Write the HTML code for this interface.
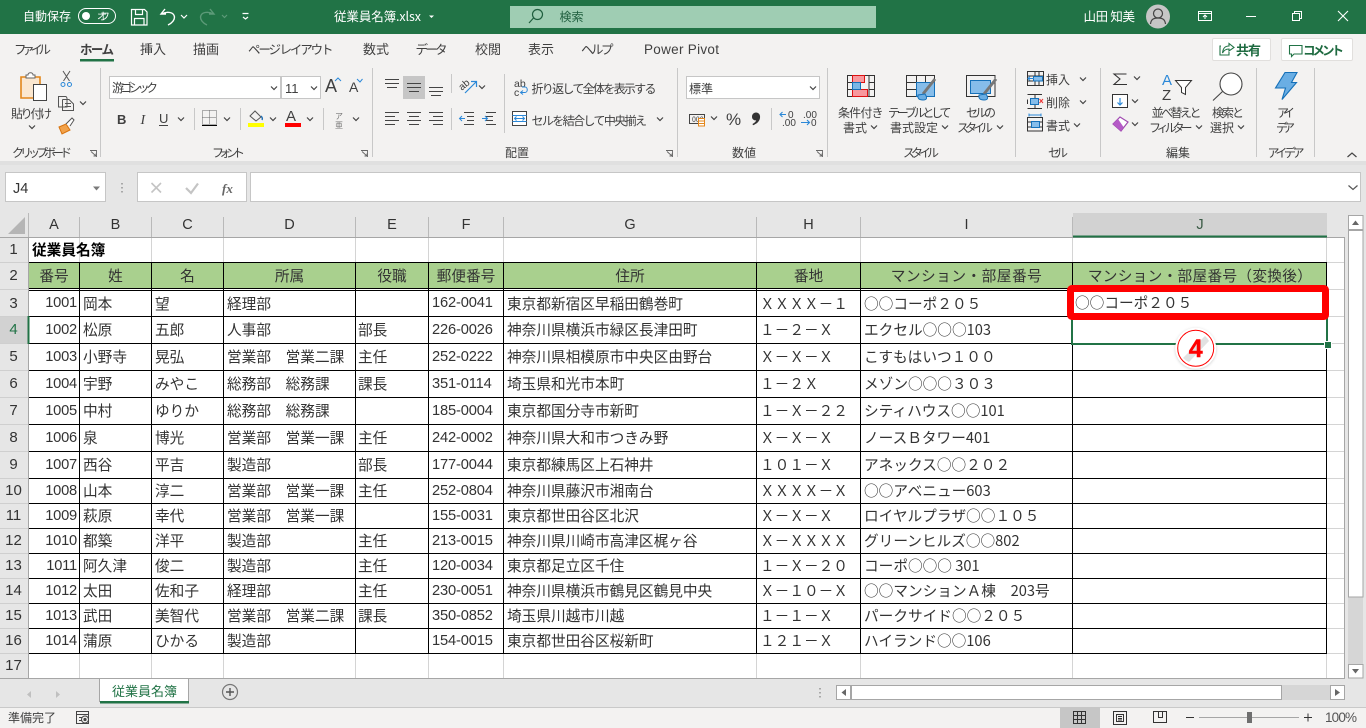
<!DOCTYPE html>
<html lang="ja"><head><meta charset="utf-8"><title>従業員名簿.xlsx - Excel</title>
<style>
html,body{margin:0;padding:0}
body{width:1366px;height:728px;position:relative;overflow:hidden;background:#e6e6e6;font-family:"Noto Sans CJK JP","Liberation Sans",sans-serif;color:#222}
.abs,.r,.r span,.h{position:absolute}
#tb{left:0;top:0;width:1366px;height:34px;background:#217346}
#rb{left:0;top:34px;width:1366px;height:127px;background:#f3f2f1}
#st{left:0;top:707px;width:1366px;height:21px;background:#f3f2f1;border-top:1px solid #c9c9c9;box-sizing:border-box}
svg{position:absolute;left:0;top:0}
svg text{font-family:"Noto Sans CJK JP","Liberation Sans",sans-serif;font-size:12px;fill:#404040}
.w{fill:#fff!important}
#sheet{left:29px;top:237px;width:1315px;height:441px;background:#fff}
.r{left:0;width:1366px;font-size:14.67px;white-space:pre;color:#333}
.r span{top:0;white-space:pre}
.a{right:1289px;font-family:"Liberation Sans",sans-serif;letter-spacing:-.2px}
.b{left:83px}.c{left:155px}.d{left:227px}.e{left:358px}
.f{left:432px;font-family:"Liberation Sans",sans-serif;letter-spacing:-.15px}
.g{left:507px}.hh{left:760px}.i{left:864px}.j{left:1075px}
.rh{left:0;width:27px;text-align:center;color:#333;font-size:15px;font-family:"Liberation Sans",sans-serif}
.ch{top:213px;height:23px;line-height:24px;text-align:center;font-size:14.5px;color:#333;font-family:"Liberation Sans",sans-serif}
.g2 span{text-align:center;height:26px}
</style></head><body>
<div class="abs" id="tb"></div>
<div class="abs" id="rb"></div>
<div class="abs" style="left:0;top:161px;width:1366px;height:4px;background:#e0e0e0"></div>

<!-- name box / formula bar -->
<div class="abs" style="left:5px;top:172px;width:101px;height:30px;background:#fff;border:1px solid #c6c6c6;box-sizing:border-box;font:14.5px/33px 'Liberation Sans',sans-serif;color:#333;padding-left:7px">J4</div>
<div class="abs" style="left:137px;top:172px;width:110px;height:30px;background:#fff;border:1px solid #c6c6c6;box-sizing:border-box"></div>
<div class="abs" style="left:250px;top:172px;width:1111px;height:30px;background:#fff;border:1px solid #c6c6c6;box-sizing:border-box"></div>

<div class="abs" id="sheet"></div>
<!-- green header rows -->
<div class="abs" style="left:29px;top:263px;width:1298px;height:26px;background:#a9d08e"></div>
<!-- selected headers -->
<div class="abs" style="left:1073px;top:213px;width:254px;height:23px;background:#d2d2d2"></div>
<div class="abs" style="left:0;top:317px;width:28px;height:26px;background:#d2d2d2"></div>

<svg width="1366" height="728" viewBox="0 0 1366 728">
<defs>
<path id="c" d="M-3 -1.5L0 1.5L3 -1.5" fill="none" stroke="#444" stroke-width="1.2"/>
</defs>
<!-- grid light lines -->
<g stroke="#d4d4d4" fill="none">
<path d="M79.5 237V262M151.5 237V262M223.5 237V262M355.5 237V262M428.5 237V262M503.5 237V262M756.5 237V262M860.5 237V262M1072.5 237V262M1326.5 237V678M79.5 654V678M151.5 654V678M223.5 654V678M355.5 654V678M428.5 654V678M503.5 654V678M756.5 654V678M860.5 654V678M1072.5 654V678"/>
<path d="M1327 262.5H1344M1327 289.5H1344M1327 316.5H1344M1327 343.5H1344M1327 370.5H1344M1327 397.5H1344M1327 424.5H1344M1327 451.5H1344M1327 478.5H1344M1327 503.5H1344M1327 528.5H1344M1327 553.5H1344M1327 578.5H1344M1327 603.5H1344M1327 628.5H1344M1327 653.5H1344"/>
</g>
<!-- grid black lines -->
<g stroke="#000" fill="none" stroke-width="1">
<path d="M29 262.5H1327M29 288.5H1327M29 290.5H1327M29 316.5H1327M29 343.5H1327M29 370.5H1327M29 397.5H1327M29 424.5H1327M29 451.5H1327M29 478.5H1327M29 503.5H1327M29 528.5H1327M29 553.5H1327M29 578.5H1327M29 603.5H1327M29 628.5H1327M29 653.5H1327"/>
<path d="M79.5 262V654M151.5 262V654M223.5 262V654M355.5 262V654M428.5 262V654M503.5 262V654M756.5 262V654M860.5 262V654M1072.5 262V654M1326.5 262V654"/>
</g>
<!-- header chrome -->
<g fill="none" stroke="#b9b9b9">
<path d="M28.5 213V237M79.5 217V237M151.5 217V237M223.5 217V237M355.5 217V237M428.5 217V237M503.5 217V237M756.5 217V237M860.5 217V237M1072.5 217V237"/>
</g>
<path d="M0 237.5H1344.5V678.5H0M28.5 237V678" fill="none" stroke="#a6a6a6"/>
<path d="M0 262.5H28M0 289.5H28M0 316.5H28M0 343.5H28M0 370.5H28M0 397.5H28M0 424.5H28M0 451.5H28M0 478.5H28M0 503.5H28M0 528.5H28M0 553.5H28M0 578.5H28M0 603.5H28M0 628.5H28M0 653.5H28" stroke="#cfcfcf" fill="none"/>
<path d="M25 217V234H8Z" fill="#b5b5b5"/>
<rect x="1073" y="235.5" width="254" height="2" fill="#217346"/>
<rect x="27.5" y="316" width="2" height="28" fill="#217346"/>

<!-- TITLE BAR -->
<text class="w" x="23" y="20.5" textLength="48">自動保存</text>
<rect x="78.5" y="8.5" width="37" height="15" rx="7.5" fill="none" stroke="#fff"/>
<circle cx="86" cy="16" r="4" fill="#fff"/>
<text class="w" x="97" y="20" style="font-size:10px" textLength="13">オフ</text>
<g fill="none" stroke="#fff" stroke-width="1.2">
<path d="M131.5 9.5H144.5L147 12V25H131.5ZM135.5 9.5V14.5H142.5V9.5M134.5 25V18.5H144V25"/>
<path d="M165 9L161 14L166 14M161.5 14C167 11 174 12 174.5 17C174.5 20 172 23 168 25" stroke-width="1.4"/>
<g stroke="#5c9a78"><path d="M210 9L214 14L209 14M213.5 14C208 11 201 12 200.5 17C200.5 20 203 23 207 25" stroke-width="1.4"/></g>
<path d="M242.5 13.5H248.5M243 17L245.5 19L248 17"/>
<path d="M181 15L184 18L187 15"/>
<path d="M222 15L224.5 17.5L227 15" stroke="#5c9a78"/>
</g>
<text class="w" x="334" y="21" style="font-size:12.5px" textLength="87">従業員名簿.xlsx</text>
<path d="M429 15.5H434L431.5 18Z" fill="#fff"/>
<rect x="510" y="6" width="366" height="22" fill="#9fcdb3"/>
<g fill="none" stroke="#1f5e3e" stroke-width="1.2"><circle cx="537.5" cy="14.5" r="5"/><path d="M533.5 18L529 23"/></g>
<text x="559.5" y="21" style="fill:#1f5e3e" textLength="24">検索</text>
<text class="w" x="1083.5" y="21" style="font-size:12.5px" textLength="51.5">山田 知美</text>
<circle cx="1158" cy="16.5" r="12" fill="#c6c6c6"/>
<g fill="none" stroke="#444" stroke-width="1.2"><circle cx="1158" cy="13.5" r="4.5"/><path d="M1150.5 24C1151 19 1154 18 1158 18S1165 19 1165.5 24"/></g>
<g fill="none" stroke="#fff">
<path d="M1198.5 11.5H1211.5V20.5H1198.5ZM1198.5 13.5H1211.5M1205 19V15M1203 17L1205 15L1207 17"/>
<path d="M1246 16.5H1256"/>
<path d="M1292.5 13.5H1299.5V20.5H1292.5ZM1294.5 13.5V11.5H1301.5V18.5H1299.5"/>
<path d="M1338 11L1348 21M1348 11L1338 21" stroke-width="1.1"/>
</g>

<!-- TABS -->
<g>
<text x="14" y="54" style="font-size:12.5px" textLength="37">ファイル</text>
<text x="80" y="54" style="font-size:12.5px;font-weight:700" textLength="34">ホーム</text>
<text x="140" y="54" style="font-size:13px" textLength="26">挿入</text>
<text x="193" y="54" style="font-size:13px" textLength="26">描画</text>
<text x="248" y="54" style="font-size:12.5px" textLength="85.5">ページ レイアウト</text>
<text x="363" y="54" style="font-size:13px" textLength="26">数式</text>
<text x="415.5" y="54" style="font-size:12.5px" textLength="32">データ</text>
<text x="475" y="54" style="font-size:13px" textLength="26">校閲</text>
<text x="528" y="54" style="font-size:13px" textLength="26">表示</text>
<text x="581" y="54" style="font-size:12.5px" textLength="32.5">ヘルプ</text>
<text x="644" y="54" style="font-size:13.5px;font-family:'Liberation Sans',sans-serif" textLength="75">Power Pivot</text>
</g>
<rect x="80" y="59" width="34" height="2.5" fill="#217346"/>
<rect x="1212.5" y="38.5" width="58" height="22" rx="1.5" fill="#fff" stroke="#e1dfdd"/>
<rect x="1281.5" y="38.5" width="71" height="22" rx="1.5" fill="#fff" stroke="#e1dfdd"/>
<g fill="none" stroke="#217346" stroke-width="1.1">
<path d="M1221 46H1220V55H1229V52M1222.5 53C1223 48 1225 46 1229 46V43.5L1234 47.5L1229 51V49C1226 49 1224 50 1222.5 53Z"/>
<path d="M1289.5 45.5H1302V54H1294L1291.5 56.5V54H1289.5Z"/>
</g>
<text x="1236" y="55" style="font-size:13px;font-weight:700;fill:#1f6b41" textLength="25">共有</text>
<text x="1303" y="55" style="font-size:12.5px;font-weight:700;fill:#1f6b41" textLength="41">コメント</text>

<!-- ribbon separators -->
<path d="M100.5 68V157M372.5 68V157M677.5 68V157M827.5 68V157M1015.5 68V157M1100.5 68V157M1256.5 68V157M1314.5 68V157M504.5 74V133M451.5 74V93M451.5 108V130M194.5 108V130M240.5 108V130M323.5 108V130M771.5 108V130" stroke="#c8c8c8" fill="none"/>

<!-- group labels -->
<text x="12" y="157" textLength="60">クリップボード</text>
<text x="212" y="157" textLength="33">フォント</text>
<text x="505" y="157" textLength="24">配置</text>
<text x="732" y="157" textLength="24">数値</text>
<text x="903" y="157" textLength="36">スタイル</text>
<text x="1048" y="157" textLength="20">セル</text>
<text x="1166" y="157" textLength="24">編集</text>
<text x="1267.5" y="157" textLength="37">アイデア</text>
<g fill="none" stroke="#666" stroke-width=".9">
<path d="M90 150.5H96.5V157M91 151.5L96 156M96 153.5V156H93.5"/>
<path d="M361 150.5H367.5V157M362 151.5L367 156M367 153.5V156H364.5"/>
<path d="M666 150.5H672.5V157M667 151.5L672 156M672 153.5V156H669.5"/>
<path d="M816 150.5H822.5V157M817 151.5L822 156M822 153.5V156H819.5"/>
</g>
<path d="M1347.5 157L1352 153L1356.5 157" fill="none" stroke="#444" stroke-width="1.2"/>

<!-- Clipboard -->
<path d="M21 77H40V98H21Z" fill="#fbe7cf" stroke="#e3861a" stroke-width="1.6"/>
<path d="M26 78V75H28C28 72 33 72 33 75H35V78Z" fill="#fff" stroke="#666"/>
<rect x="33.5" y="84.5" width="13" height="16" fill="#fff" stroke="#444"/>
<text x="11" y="118" textLength="41">貼り付け</text>
<use href="#c" x="32" y="127"/>
<g fill="none" stroke="#555">
<path d="M63 71L69.5 81M70 71L63.5 81"/>
<circle cx="63" cy="84.5" r="2" stroke="#2b88d8"/><circle cx="69.5" cy="84.5" r="2" stroke="#2b88d8"/>
<path d="M58.5 96.5H66L67 98V107H58.5ZM62.5 99.5H69L73.5 104V110.5H62.5V99.5M65 103.5H71M65 106.5H71"/>
</g>
<use href="#c" x="83" y="103"/>
<path d="M59 127L66 124L70 130L62 134Z" fill="#f2a24a" stroke="#d8730e"/><path d="M66 124L72 118L74 120L70 126" fill="#fff" stroke="#555"/>

<!-- Font -->
<rect x="109.5" y="76.5" width="171" height="22" fill="#fff" stroke="#c6c6c6"/>
<rect x="281.5" y="76.5" width="39" height="22" fill="#fff" stroke="#c6c6c6"/>
<text x="112" y="92" textLength="46">游ゴシック</text>
<text x="285" y="93" style="font-family:'Liberation Sans',sans-serif;font-size:13px">11</text>
<use href="#c" x="274" y="88"/><use href="#c" x="314" y="88"/>
<text x="325" y="92" style="font-family:'Liberation Sans',sans-serif;font-size:18px">A</text>
<text x="349" y="92" style="font-family:'Liberation Sans',sans-serif;font-size:14px">A</text>
<path d="M335 81L338 78L341 81" fill="none" stroke="#2b88d8"/><path d="M357 79L360 82L362.5 79" fill="none" stroke="#2b88d8"/>
<text x="117" y="124" style="font:700 13px 'Liberation Sans',sans-serif">B</text>
<text x="140.5" y="124" style="font:italic 14px 'Liberation Serif',serif">I</text>
<text x="159" y="123" style="font:13px 'Liberation Sans',sans-serif">U</text>
<path d="M159 125.5H168" stroke="#444"/>
<use href="#c" x="181" y="119"/><use href="#c" x="227" y="119"/><use href="#c" x="273" y="119"/><use href="#c" x="310" y="119"/><use href="#c" x="356" y="119"/>
<path d="M202.5 110.5H216.5V124.5H202.5ZM209.5 110.5V124.5M202.5 117.5H216.5" fill="none" stroke="#666" stroke-dasharray="1 1"/>
<path d="M202 125.5H217" stroke="#000"/>
<path d="M250 116L255 111L261 117L256 121Z" fill="none" stroke="#555"/><path d="M261 116Q263 118 262 120" stroke="#1f6fb5" fill="none" stroke-width="1.4"/>
<rect x="248" y="123" width="16" height="4" fill="#ff0"/>
<text x="286" y="121" style="font:15px 'Liberation Sans',sans-serif">A</text>
<rect x="285" y="123" width="16" height="4" fill="#f00"/>
<text x="335" y="119" style="font-size:8px;fill:#777">ア</text><text x="335" y="128" style="font-size:8px;fill:#777">亜</text>

<!-- Alignment -->
<rect x="403" y="76" width="22" height="23" fill="#c6c6c6"/>
<g fill="none" stroke="#444">
<path d="M385 79.5H399M385 83.5H399M387 87.5H397"/>
<path d="M407 83.5H421M407 87.5H421M409 91.5H419"/>
<path d="M429 87.5H443M429 91.5H443M431 95.5H441"/>
<path d="M385 112.5H399M385 116.5H395M385 120.5H399M385 124.5H395"/>
<path d="M407 112.5H421M409 116.5H419M407 120.5H421M409 124.5H419"/>
<path d="M429 112.5H443M433 116.5H443M429 120.5H443M433 124.5H443"/>
<path d="M464 112.5H474M467 116.5H474M467 120.5H474M464 124.5H474"/>
<path d="M486 112.5H496M486 116.5H493M486 120.5H493M486 124.5H496"/>
</g>
<path d="M460 118.5H465M462 116L459.5 118.5L462 121" fill="none" stroke="#2b88d8"/>
<path d="M482 118.5H487M485 116L487.5 118.5L485 121" fill="none" stroke="#2b88d8"/>
<text x="459" y="89" transform="rotate(-40 463 86)" style="font:10px 'Liberation Sans',sans-serif">ab</text>
<path d="M465 93L476 82M471 81.5H476.5V87" fill="none" stroke="#2b88d8" stroke-width="1.2"/>
<use href="#c" x="482" y="87"/>
<text x="514" y="87" style="font:10.5px 'Liberation Sans',sans-serif">ab</text>
<text x="514" y="96" style="font:10.5px 'Liberation Sans',sans-serif">c</text>
<path d="M521 92.5H525C528 92.5 528 87 525 87H522M523 90.5L520.5 92.5L523 94.5" fill="none" stroke="#2b88d8"/>
<text x="531.5" y="93" textLength="125">折り返して全体を表示する</text>
<rect x="512.5" y="111.5" width="14" height="14" fill="#fff" stroke="#444"/>
<path d="M512.5 115.5H526.5M512.5 121.5H526.5" stroke="#2b88d8"/>
<rect x="513" y="116" width="13" height="5" fill="#fff"/>
<path d="M514.5 118.5H524.5M516.5 116.5L514.5 118.5L516.5 120.5M522.5 116.5L524.5 118.5L522.5 120.5" fill="none" stroke="#2b88d8"/>
<text x="531.5" y="125" textLength="115.5">セルを結合して中央揃え</text>
<use href="#c" x="660" y="119"/>

<!-- Number -->
<rect x="686.5" y="76.5" width="133" height="22" fill="#fff" stroke="#c6c6c6"/>
<text x="689" y="93">標準</text>
<use href="#c" x="813" y="88"/>
<rect x="689.5" y="114.5" width="15" height="9" fill="none" stroke="#444"/><text x="692" y="122" style="font-size:7px">000</text>
<rect x="698.5" y="118.5" width="6" height="7.5" fill="#fff" stroke="#e3861a"/>
<path d="M698.5 121H704.5M698.5 123.5H704.5" stroke="#e3861a"/>
<use href="#c" x="714" y="118"/>
<text x="726" y="125" style="font:17px 'Liberation Sans',sans-serif">%</text>
<path d="M756 112.5C759 112.5 760.5 115 760 118C759.5 121.5 756.5 124 753 125.2L752.5 124C754.5 123 755.8 121.8 756.2 120.3C753.8 120.6 752 119 752 116.7C752 114.3 753.7 112.5 756 112.5Z" fill="#333"/>
<g style="font:10px 'Liberation Sans',sans-serif">
<text x="788" y="118" style="font:10px 'Liberation Sans',sans-serif">0</text>
<text x="782" y="126" style="font:10px 'Liberation Sans',sans-serif">.00</text>
<text x="803" y="118" style="font:10px 'Liberation Sans',sans-serif">.00</text>
<text x="811" y="126" style="font:10px 'Liberation Sans',sans-serif">0</text>
</g>
<path d="M786 114.5H780M782.5 112L780 114.5L782.5 117M801 122.5H809.5M807 120L809.5 122.5L807 125" fill="none" stroke="#2b88d8" stroke-width="1.1"/>

<!-- Styles -->
<g stroke="#333" fill="none">
<path d="M847.5 75.5H874.5V96.5H847.5Z"/>
<rect x="852.5" y="75.5" width="12" height="7" fill="#f8989d" stroke="#d11"/>
<rect x="852.5" y="89.5" width="15" height="7" fill="#f8989d" stroke="#d11"/>
<rect x="852.5" y="82.5" width="8" height="7" fill="#7bb7e6" stroke="#1570b8"/>
<path d="M847.5 82.5H852M847.5 89.5H852M869 82.5H874.5M869 89.5H874.5M869 75.5V96.5"/>
</g>
<text x="838" y="117" textLength="45.5">条件付き</text>
<text x="843" y="132" textLength="24">書式</text><use href="#c" x="874" y="127"/>
<g stroke="#333" fill="none">
<path d="M906.5 75.5H934.5V96.5H906.5ZM906.5 82.5H934.5M906.5 89.5H934.5M916.5 75.5V96.5M925.5 75.5V96.5"/>
<rect x="916.5" y="82.5" width="18" height="14" fill="#86bdea" stroke="#1570b8"/>
<path d="M935 79L923 94" stroke="#777" stroke-width="3"/><path d="M918 95Q917 100 923 100T925 94Z" fill="#6aaee4" stroke="#1570b8"/>
<path d="M966.5 75.5H995V96.5H966.5Z"/>
<rect x="970.5" y="80.5" width="20" height="13" fill="#86bdea" stroke="#1570b8"/>
<path d="M996 79L984 94" stroke="#777" stroke-width="3"/><path d="M979 95Q978 100 984 100T986 94Z" fill="#6aaee4" stroke="#1570b8"/>
</g>
<text x="888" y="117" textLength="63.5">テーブルとして</text>
<text x="890" y="132" textLength="48">書式設定</text><use href="#c" x="945" y="127"/>
<text x="966" y="117" textLength="30">セルの</text>
<text x="957" y="132" textLength="36">スタイル</text><use href="#c" x="1000" y="127"/>

<!-- Cells -->
<g fill="none" stroke="#333">
<path d="M1027.5 71.5H1043.5V85.5H1027.5ZM1027.5 76H1043.5M1027.5 81H1043.5M1035 71.5V85.5M1039 71.5V85.5"/>
<rect x="1033.5" y="76.5" width="9" height="4.5" fill="#86bdea" stroke="#1570b8"/>
<path d="M1034 78.5H1028M1030 76.5L1028 78.5L1030 80.5" stroke="#2b88d8"/>
<path d="M1027.5 94.5H1042M1027.5 108.5H1042M1035 94.5V99M1035 104V108.5M1027.5 99.5V104"/>
<rect x="1030.5" y="98.5" width="8" height="6" fill="#86bdea" stroke="#1570b8"/>
<path d="M1039.5 99L1043 103M1043 99L1039.5 103" stroke="#e33"/>
<rect x="1027.5" y="117.5" width="15" height="13.5"/>
<path d="M1027.5 122H1042.5M1027.5 127H1042.5"/>
<rect x="1031.5" y="121.5" width="8" height="6" fill="#86bdea" stroke="#1570b8"/>
<path d="M1029 115H1041M1029 113.5V116.5M1041 113.5V116.5" stroke="#2b88d8"/>
</g>
<text x="1046" y="84" textLength="24">挿入</text><use href="#c" x="1083" y="79"/>
<text x="1046" y="107" textLength="24">削除</text><use href="#c" x="1083" y="102"/>
<text x="1046" y="130" textLength="24">書式</text><use href="#c" x="1077" y="125"/>

<!-- Editing -->
<path d="M1126.5 74H1114L1120 79L1114 84.5H1127" fill="none" stroke="#333" stroke-width="1.1"/>
<use href="#c" x="1137" y="78"/>
<rect x="1112.5" y="94.5" width="15" height="13" fill="#fff" stroke="#333"/>
<path d="M1120 98V105M1117.5 102.5L1120 105L1122.5 102.5" fill="none" stroke="#2b88d8" stroke-width="1.2"/>
<use href="#c" x="1135" y="101"/>
<path d="M1113 124L1120 117L1128 122L1121 131Z" fill="#fff" stroke="#a04ab0" stroke-width="1.2"/><path d="M1113 124L1118 119L1123.5 127L1121 131Z" fill="#b55bc7"/>
<use href="#c" x="1135" y="124"/>
<text x="1162" y="85" style="font:15px 'Liberation Sans',sans-serif;fill:#2b88d8">A</text>
<text x="1162" y="100" style="font:15px 'Liberation Sans',sans-serif">Z</text>
<path d="M1175.5 80.5H1191.5L1185.5 87.5V94.5L1181.5 92.5V87.5Z" fill="#fff" stroke="#333"/>
<text x="1151.5" y="117" textLength="50">並べ替えと</text>
<text x="1149" y="132" textLength="43.5">フィルター</text><use href="#c" x="1199" y="127"/>
<circle cx="1231" cy="84" r="11" fill="#fff" stroke="#444" stroke-width="1.1"/>
<path d="M1222.5 91.5L1213 100.5" stroke="#444" fill="none" stroke-width="1.1"/>
<text x="1212" y="117" textLength="32">検索と</text>
<text x="1210" y="132" textLength="24">選択</text><use href="#c" x="1241" y="127"/>
<!-- Ideas -->
<path d="M1285 72.5H1297L1291.5 82.5H1296.5L1282 99.5L1285.5 88H1275.5Z" fill="#6aaee4" stroke="#1570b8" stroke-width="1.1"/>
<text x="1277" y="117" textLength="18">アイ</text>
<text x="1276" y="132" textLength="19">デア</text>

<!-- Formula bar bits -->
<path d="M93 186.5H100L96.5 190.5Z" fill="#7a7a7a"/>
<path d="M122 183V184.5M122 187V188.5M122 191V192.5" stroke="#999" stroke-width="1.6"/>
<path d="M151.5 183L161 192.5M161 183L151.5 192.5" stroke="#c4c4c4" stroke-width="1.6" fill="none"/>
<path d="M186 188L191 193L198 183.5" stroke="#c4c4c4" stroke-width="2.2" fill="none"/>
<text x="222" y="193" style="font:italic 700 13px 'Liberation Serif',serif;fill:#666">fx</text>
<path d="M1348.5 185.5L1353 189.5L1357.5 185.5" stroke="#555" fill="none" stroke-width="1.2"/>

<!-- Sheet tabs -->
<path d="M99.5 702V678.5H188.5V702" fill="#fff" stroke="#a6a6a6"/>
<rect x="100" y="701" width="89" height="2.5" fill="#217346"/>
<text x="112" y="696" style="font-size:13px;fill:#217346" textLength="65">従業員名簿</text>
<path d="M31 691L27 694.5L31 698Z" fill="#c0c0c0"/><path d="M56 691L60 694.5L56 698Z" fill="#c0c0c0"/>
<circle cx="230" cy="692" r="7.5" fill="none" stroke="#777" stroke-width="1.2"/>
<path d="M230 688V696M226 692H234" stroke="#555" stroke-width="1.4"/>
<path d="M820 688V689.5M820 692V693.5M820 696V697.5" stroke="#999" stroke-width="1.6"/>
<!-- H scroll -->
<rect x="836.5" y="685.5" width="14" height="14" fill="#fff" stroke="#a6a6a6"/>
<path d="M846 689V696L841.5 692.5Z" fill="#666"/>
<rect x="851" y="685" width="479" height="15" fill="#d6d6d6"/>
<rect x="851.5" y="685.5" width="430" height="14" fill="#fff" stroke="#a6a6a6"/>
<rect x="1330.5" y="685.5" width="14" height="14" fill="#fff" stroke="#a6a6a6"/>
<path d="M1335 689V696L1340 692.5Z" fill="#666"/>
<!-- V scroll -->
<rect x="1348" y="215" width="15" height="463" fill="#d6d6d6"/>
<rect x="1348.5" y="215.5" width="14.5" height="14" fill="#fff" stroke="#a6a6a6"/>
<path d="M1352 225H1359L1355.5 220.5Z" fill="#666"/>
<rect x="1348.5" y="230.5" width="14.5" height="366.5" fill="#fff" stroke="#a6a6a6"/>
<rect x="1348.5" y="664.5" width="14.5" height="13.5" fill="#fff" stroke="#a6a6a6"/>
<path d="M1352 669H1359L1355.5 673.5Z" fill="#666"/>
</svg>

<!-- Column headers -->
<div class="abs ch" style="left:29px;width:50px">A</div>
<div class="abs ch" style="left:80px;width:71px">B</div>
<div class="abs ch" style="left:152px;width:71px">C</div>
<div class="abs ch" style="left:224px;width:131px">D</div>
<div class="abs ch" style="left:356px;width:72px">E</div>
<div class="abs ch" style="left:429px;width:74px">F</div>
<div class="abs ch" style="left:504px;width:252px">G</div>
<div class="abs ch" style="left:757px;width:103px">H</div>
<div class="abs ch" style="left:861px;width:211px">I</div>
<div class="abs ch" style="left:1073px;width:254px;color:#3a5a45">J</div>

<!-- Row numbers -->
<div class="abs rh" style="top:238px;line-height:24px">1</div>
<div class="abs rh" style="top:263px;line-height:26px">2</div>
<div class="abs rh" style="top:291px;line-height:25px">3</div>
<div class="abs rh" style="top:317px;line-height:26px;color:#217346">4</div>
<div class="abs rh" style="top:344px;line-height:26px">5</div>
<div class="abs rh" style="top:371px;line-height:26px">6</div>
<div class="abs rh" style="top:398px;line-height:26px">7</div>
<div class="abs rh" style="top:425px;line-height:26px">8</div>
<div class="abs rh" style="top:452px;line-height:26px">9</div>
<div class="abs rh" style="top:479px;line-height:24px">10</div>
<div class="abs rh" style="top:504px;line-height:24px">11</div>
<div class="abs rh" style="top:529px;line-height:24px">12</div>
<div class="abs rh" style="top:554px;line-height:24px">13</div>
<div class="abs rh" style="top:579px;line-height:24px">14</div>
<div class="abs rh" style="top:604px;line-height:24px">15</div>
<div class="abs rh" style="top:629px;line-height:24px">16</div>
<div class="abs rh" style="top:654px;line-height:24px">17</div>

<!-- Rows -->
<div class="r" style="top:238px;height:24px;line-height:24px;font-weight:700;color:#000"><span style="left:32px">従業員名簿</span></div>
<div class="r g2" style="top:263px;height:26px;line-height:25px">
<span style="left:29px;width:50px">番号</span><span style="left:80px;width:71px">姓</span><span style="left:152px;width:71px">名</span><span style="left:224px;width:131px">所属</span><span style="left:356px;width:72px">役職</span><span style="left:429px;width:74px">郵便番号</span><span style="left:504px;width:252px">住所</span><span style="left:757px;width:103px">番地</span><span style="left:861px;width:211px;letter-spacing:.5px">マンション・部屋番号</span><span style="left:1073px;width:254px;letter-spacing:.3px">マンション・部屋番号（変換後）</span></div>

<div class="r" style="top:291px;line-height:25px"><span class="a">1001</span><span class="b">岡本</span><span class="c">望</span><span class="d">経理部</span><span class="f">162-0041</span><span class="g">東京都新宿区早稲田鶴巻町</span><span class="hh">ＸＸＸＸ－１</span><span class="i">○○コーポ２０５</span></div>
<div class="r" style="top:317px;line-height:26px"><span class="a">1002</span><span class="b">松原</span><span class="c">五郎</span><span class="d">人事部</span><span class="e">部長</span><span class="f">226-0026</span><span class="g">神奈川県横浜市緑区長津田町</span><span class="hh">１－２－Ｘ</span><span class="i">エクセル○○○103</span></div>
<div class="r" style="top:344px;line-height:26px"><span class="a">1003</span><span class="b">小野寺</span><span class="c">晃弘</span><span class="d">営業部　営業二課</span><span class="e">主任</span><span class="f">252-0222</span><span class="g">神奈川県相模原市中央区由野台</span><span class="hh">Ｘ－Ｘ－Ｘ</span><span class="i">こすもはいつ１００</span></div>
<div class="r" style="top:371px;line-height:26px"><span class="a">1004</span><span class="b">宇野</span><span class="c">みやこ</span><span class="d">総務部　総務課</span><span class="e">課長</span><span class="f">351-0114</span><span class="g">埼玉県和光市本町</span><span class="hh">１－２Ｘ</span><span class="i">メゾン○○○３０３</span></div>
<div class="r" style="top:398px;line-height:26px"><span class="a">1005</span><span class="b">中村</span><span class="c">ゆりか</span><span class="d">総務部　総務課</span><span class="f">185-0004</span><span class="g">東京都国分寺市新町</span><span class="hh">１－Ｘ－２２</span><span class="i">シティハウス○○101</span></div>
<div class="r" style="top:425px;line-height:26px"><span class="a">1006</span><span class="b">泉</span><span class="c">博光</span><span class="d">営業部　営業一課</span><span class="e">主任</span><span class="f">242-0002</span><span class="g">神奈川県大和市つきみ野</span><span class="hh">Ｘ－Ｘ－Ｘ</span><span class="i">ノースＢタワー401</span></div>
<div class="r" style="top:452px;line-height:26px"><span class="a">1007</span><span class="b">西谷</span><span class="c">平吉</span><span class="d">製造部</span><span class="e">部長</span><span class="f">177-0044</span><span class="g">東京都練馬区上石神井</span><span class="hh">１０１－Ｘ</span><span class="i">アネックス○○２０２</span></div>
<div class="r" style="top:479px;line-height:24px"><span class="a">1008</span><span class="b">山本</span><span class="c">淳二</span><span class="d">営業部　営業一課</span><span class="e">主任</span><span class="f">252-0804</span><span class="g">神奈川県藤沢市湘南台</span><span class="hh">ＸＸＸＸ－Ｘ</span><span class="i">○○アベニュー603</span></div>
<div class="r" style="top:504px;line-height:24px"><span class="a">1009</span><span class="b">萩原</span><span class="c">幸代</span><span class="d">営業部　営業一課</span><span class="f">155-0031</span><span class="g">東京都世田谷区北沢</span><span class="hh">Ｘ－Ｘ－Ｘ</span><span class="i">ロイヤルプラザ○○１０５</span></div>
<div class="r" style="top:529px;line-height:24px"><span class="a">1010</span><span class="b">都築</span><span class="c">洋平</span><span class="d">製造部</span><span class="e">主任</span><span class="f">213-0015</span><span class="g">神奈川県川崎市高津区梶ヶ谷</span><span class="hh">Ｘ－ＸＸＸＸ</span><span class="i">グリーンヒルズ○○802</span></div>
<div class="r" style="top:554px;line-height:24px"><span class="a">1011</span><span class="b">阿久津</span><span class="c">俊二</span><span class="d">製造部</span><span class="e">主任</span><span class="f">120-0034</span><span class="g">東京都足立区千住</span><span class="hh">１－Ｘ－２０</span><span class="i">コーポ○○○ 301</span></div>
<div class="r" style="top:579px;line-height:24px"><span class="a">1012</span><span class="b">太田</span><span class="c">佐和子</span><span class="d">経理部</span><span class="e">主任</span><span class="f">230-0051</span><span class="g">神奈川県横浜市鶴見区鶴見中央</span><span class="hh">Ｘ－１０－Ｘ</span><span class="i">○○マンションＡ棟　203号</span></div>
<div class="r" style="top:604px;line-height:24px"><span class="a">1013</span><span class="b">武田</span><span class="c">美智代</span><span class="d">営業部　営業二課</span><span class="e">課長</span><span class="f">350-0852</span><span class="g">埼玉県川越市川越</span><span class="hh">１－１－Ｘ</span><span class="i">パークサイド○○２０５</span></div>
<div class="r" style="top:629px;line-height:24px"><span class="a">1014</span><span class="b">蒲原</span><span class="c">ひかる</span><span class="d">製造部</span><span class="f">154-0015</span><span class="g">東京都世田谷区桜新町</span><span class="hh">１２１－Ｘ</span><span class="i">ハイランド○○106</span></div>

<!-- Selection J4 -->
<div class="abs" style="left:1071px;top:315px;width:257px;height:30px;border:2px solid #217346;box-sizing:border-box"></div>
<div class="abs" style="left:1323.5px;top:341px;width:6px;height:6px;background:#217346;border:1px solid #fff"></div>
<!-- red box -->
<div class="abs" style="left:1067px;top:285px;width:262px;height:35px;border:7px solid #f00;border-radius:5px;box-sizing:border-box;background:#fff;font-size:14.67px;line-height:22px;color:#333;white-space:pre;padding-left:1px">○○コーポ２０５</div>

<!-- Callout -->
<svg width="1366" height="728" viewBox="0 0 1366 728">
<defs><filter id="sh" x="-30%" y="-30%" width="160%" height="160%"><feGaussianBlur stdDeviation="1.5"/></filter></defs>
<circle cx="1195.7" cy="349" r="20" fill="#000" opacity=".25" filter="url(#sh)"/>
<circle cx="1195.7" cy="348.3" r="20.5" fill="#fff"/>
<circle cx="1195.7" cy="348.3" r="18" fill="#fff" stroke="#f00" stroke-width="1"/>
<path d="M1183 358L1205 336A16 16 0 0 1 1209 341L1189 362A16 16 0 0 1 1183 358Z" fill="#e2e2e2"/>
<text x="1195.7" y="357" text-anchor="middle" style="font:700 25px 'Liberation Sans',sans-serif;fill:#f00;stroke:#f00;stroke-width:.4">4</text>
</svg>

<!-- Status bar -->
<div class="abs" id="st"></div>
<svg width="1366" height="728" viewBox="0 0 1366 728">
<text x="8" y="722">準備完了</text>
<g fill="none" stroke="#444">
<path d="M76.5 711.5H88.5V723.5H76.5ZM76.5 714.5H88.5M79 717.5H83M79 720.5H82"/>
<circle cx="85" cy="719.5" r="3.5" fill="#f3f2f1"/>
</g>
<circle cx="85" cy="719.5" r="1.6" fill="#444"/>
<rect x="1060" y="707" width="40" height="21" fill="#c6c6c6"/>
<g fill="none" stroke="#333">
<path d="M1073.5 711.5H1085.5V723.5H1073.5ZM1073.5 715.5H1085.5M1073.5 719.5H1085.5M1077.5 711.5V723.5M1081.5 711.5V723.5"/>
<path d="M1113.5 711.5H1126.5V724.5H1113.5ZM1116.5 714.5H1123.5V721.5H1116.5ZM1118 716.5H1122M1118 718.5H1122M1118 720H1122"/>
<path d="M1153.5 711.5H1166.5V722.5H1153.5ZM1158.5 711.5V717.5H1162.5V711.5"/>
<path d="M1186 717.5H1194M1304 717.5H1312M1308 713.5V721.5"/>
</g>
<path d="M1199 717.5H1299" stroke="#a6a6a6"/>
<rect x="1247" y="712" width="5" height="11" fill="#6f6f6f"/>
<text x="1325" y="722" style="font:13.5px 'Liberation Sans',sans-serif;fill:#555" textLength="32">100%</text>
</svg>
</body></html>
